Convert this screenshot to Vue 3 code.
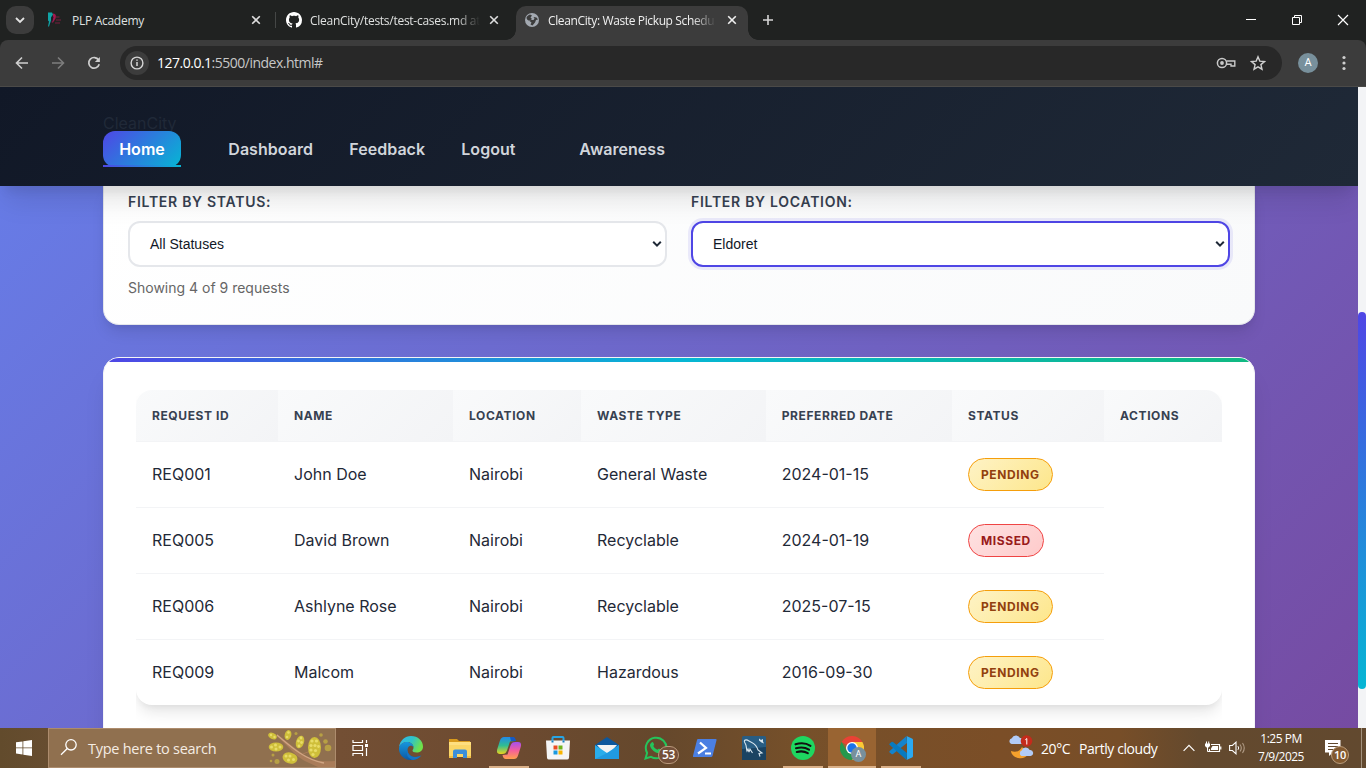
<script setup>
const nav = [
  { text: 'Home', cls: 'home' },
  { text: 'Dashboard', cls: 'dash' },
  { text: 'Feedback', cls: 'feed' },
  { text: 'Logout', cls: 'logout' },
  { text: 'Awareness', cls: 'aware' },
]
const heads = ['Request ID', 'Name', 'Location', 'Waste Type', 'Preferred Date', 'Status', 'Actions']
const rows = [
  ['REQ001', 'John Doe', 'Nairobi', 'General Waste', '2024-01-15', 'Pending'],
  ['REQ005', 'David Brown', 'Nairobi', 'Recyclable', '2024-01-19', 'Missed'],
  ['REQ006', 'Ashlyne Rose', 'Nairobi', 'Recyclable', '2025-07-15', 'Pending'],
  ['REQ009', 'Malcom', 'Nairobi', 'Hazardous', '2016-09-30', 'Pending'],
]
</script>

<template>
  <div class="screen">
    <div class="tabs">
      <div class="tab-search">
        <svg width="28" height="28" viewBox="0 0 28 28"><path d="M10 12l4 4 4-4" fill="none" stroke="#e3e3e3" stroke-width="1.8" /></svg>
      </div>
      <div class="tab t1">
        <svg class="fav" width="16" height="16" viewBox="0 0 16 16">
          <path d="M2 .5h4l1 2-2 3v3l-2 6H2l1-5-1-1z" fill="#10a3a5" />
          <path d="M7 1.500c3 0 3.500 3 2.500 5L7 10.500H5l2-4z" fill="#a3194f" />
          <path d="M6 4l1.500 1-1 4-2.500 5 1.500-5z" fill="#171d2b" />
          <path d="M9.500 5h4M10 8h5M9 11h5" stroke="#7a1c3f" stroke-width="1" />
        </svg>
        <span class="title plp">PLP Academy</span>
        <svg class="x" width="10" height="10" viewBox="0 0 10 10"><path d="M1.200 1.200l7.600 7.600M8.800 1.200l-7.600 7.600" stroke="#dedede" stroke-width="1.600" /></svg>
      </div>
      <div class="sep"></div>
      <div class="tab t2">
        <svg class="fav" width="16" height="16" viewBox="0 0 16 16"><path fill="#fff" fill-rule="evenodd" d="M8 0C3.580 0 0 3.580 0 8c0 3.540 2.290 6.530 5.470 7.590.4.070.550-.170.550-.380 0-.190-.010-.820-.010-1.490-2.010.370-2.530-.490-2.690-.940-.090-.230-.480-.940-.820-1.130-.280-.150-.680-.520-.010-.530.630-.010 1.080.580 1.230.820.720 1.210 1.870.870 2.330.660.070-.520.280-.870.510-1.070-1.780-.2-3.640-.890-3.640-3.950 0-.870.310-1.590.820-2.150-.080-.2-.360-1.020.080-2.120 0 0 .670-.210 2.200.820.640-.180 1.320-.270 2-.270s1.360.090 2 .270c1.530-1.040 2.200-.820 2.200-.820.440 1.100.160 1.920.080 2.120.510.560.820 1.270.820 2.150 0 3.070-1.870 3.750-3.650 3.950.290.250.540.730.540 1.480 0 1.070-.010 1.930-.010 2.200 0 .210.150.460.550.380A8.010 8.010 0 0 0 16 8c0-4.420-3.580-8-8-8z" /></svg>
        <span class="title fade gh">CleanCity/tests/test-cases.md at</span>
        <svg class="x" width="10" height="10" viewBox="0 0 10 10"><path d="M1.200 1.200l7.600 7.600M8.800 1.200l-7.600 7.600" stroke="#dedede" stroke-width="1.600" /></svg>
      </div>
      <div class="tab t3">
        <svg class="fav" width="16" height="16" viewBox="0 0 16 16">
          <circle cx="8" cy="8" r="7" fill="#a3a9b1" />
          <path d="M2.500 5.500C3 4 4.500 3 6 2.500L8 3.500 6.500 5.500 8 7l-2 1.500-1.500 0C3.500 8 2.500 7 2.500 5.500zM9.500 5l3 .5 1.500 2-2 .5-1 2.500-2.500 3-2-1 1-2-2-1.500 1.500-1h2.500l1-1.500z" fill="#3c3c3c" />
        </svg>
        <span class="title fade cc">CleanCity: Waste Pickup Schedu</span>
        <svg class="x" width="10" height="10" viewBox="0 0 10 10"><path d="M1.200 1.200l7.600 7.600M8.800 1.200l-7.600 7.600" stroke="#f0f0f0" stroke-width="1.600" /></svg>
      </div>
      <svg class="plus" width="12" height="12" viewBox="0 0 12 12"><path d="M6 1v10M1 6h10" stroke="#d5d5d5" stroke-width="1.600" /></svg>
      <div class="win">
        <svg width="46" height="40" viewBox="0 0 46 40"><path d="M18 19.500h10" stroke="#fff" /></svg>
        <svg width="46" height="40" viewBox="0 0 46 40"><path d="M18.500 17.500h7v7h-7zM20.500 17.500v-2h7v7h-2" fill="none" stroke="#fff" /></svg>
        <svg width="46" height="40" viewBox="0 0 46 40"><path d="M18 15l10 10M28 15l-10 10" stroke="#fff" stroke-width="1.200" /></svg>
      </div>
    </div>

    <div class="toolbar-back">
      <div class="toolbar">
        <svg width="36" height="36" viewBox="0 0 36 36"><path d="M24 18H13M18 12.500L12.500 18l5.500 5.500" fill="none" stroke="#cfcfcf" stroke-width="1.600" /></svg>
        <svg width="36" height="36" viewBox="0 0 36 36"><path d="M12 18h11M18 12.500l5.500 5.500-5.500 5.500" fill="none" stroke="#7d7d7d" stroke-width="1.600" /></svg>
        <svg width="36" height="36" viewBox="0 0 36 36"><path d="M22.600 15A5.300 5.300 0 1 0 23.200 19.300" fill="none" stroke="#cfcfcf" stroke-width="1.700" /><path d="M23.900 12v5h-5z" fill="#cfcfcf" /></svg>
        <div class="omni">
          <div class="info">
            <svg width="24" height="24" viewBox="0 0 24 24"><circle cx="12" cy="12" r="5.900" fill="none" stroke="#d6d6d6" stroke-width="1.400" /><path d="M12 11v4M12 8.500v1.300" stroke="#d6d6d6" stroke-width="1.500" /></svg>
          </div>
          <span class="url"><b>127.0.0.1</b>:5500/index.html#</span>
          <svg class="key" width="20" height="16" viewBox="0 0 20 16"><circle cx="6" cy="8" r="4.600" fill="none" stroke="#c9c9c9" stroke-width="1.500" /><circle cx="6" cy="8" r="1.900" fill="#c9c9c9" /><path d="M10.500 6h8.300v5h-3.800v-1.800h-4.500" fill="none" stroke="#c9c9c9" stroke-width="1.400" /></svg>
          <svg class="star" width="16" height="16" viewBox="0 0 16 16"><path d="M8 1.800l1.800 4.300 4.700.400-3.600 3.100 1.100 4.600L8 11.800l-4 2.400 1.100-4.600L1.500 6.500l4.700-.4z" fill="none" stroke="#d0d0d0" stroke-width="1.400" /></svg>
        </div>
        <div class="avatar">A</div>
        <svg class="menu" width="6" height="16" viewBox="0 0 6 16"><g fill="#cfcfcf"><circle cx="3" cy="2.500" r="1.600" /><circle cx="3" cy="8" r="1.600" /><circle cx="3" cy="13.500" r="1.600" /></g></svg>
      </div>
    </div>

    <div class="viewport">
      <div class="page">
        <header>
          <div class="logo">CleanCity</div>
          <nav><a v-for="n in nav" :key="n.text" :class="n.cls">{{ n.text }}</a></nav>
        </header>
        <section class="card filters">
          <div class="field">
            <label>Filter by Status:</label>
            <div class="select"><span>All Statuses</span><svg width="10" height="8" viewBox="0 0 10 8"><path d="M1.200 1.800L5 5.600l3.800-3.800" fill="none" stroke="#1f2937" stroke-width="2" /></svg></div>
            <p>Showing 4 of 9 requests</p>
          </div>
          <div class="field">
            <label>Filter by Location:</label>
            <div class="select focus"><span>Eldoret</span><svg width="10" height="8" viewBox="0 0 10 8"><path d="M1.200 1.800L5 5.600l3.800-3.800" fill="none" stroke="#1f2937" stroke-width="2" /></svg></div>
          </div>
        </section>
        <section class="card list">
          <div class="bar"></div>
          <div class="wrap">
            <table>
              <thead><tr><th v-for="h in heads" :key="h">{{ h }}</th></tr></thead>
              <tbody>
                <tr v-for="r in rows" :key="r[0]">
                  <td v-for="c in r.slice(0, 5)" :key="c">{{ c }}</td>
                  <td class="st"><span class="badge" :class="r[5].toLowerCase()">{{ r[5] }}</span></td>
                </tr>
              </tbody>
            </table>
          </div>
        </section>
      </div>
      <div class="scroll"><div class="thumb"></div></div>
    </div>

    <footer class="taskbar">
      <div class="start">
        <svg width="16" height="16" viewBox="0 0 16 16"><path fill="#fff" d="M0 2.300l6.500-.9v6.100H0zM7.300 1.300L16 0v7.500H7.300zM0 8.300h6.500v6.200L0 13.600zM7.300 8.300H16V16l-8.700-1.300z" /></svg>
      </div>
      <div class="search">
        <svg class="mag" width="18" height="18" viewBox="0 0 18 18"><circle cx="11" cy="6.800" r="5.200" fill="none" stroke="#fff" stroke-width="1.300" /><path d="M7.300 10.500L1 16.800" stroke="#fff" stroke-width="1.300" /></svg>
        <span>Type here to search</span>
        <svg class="flower" width="67" height="38" viewBox="0 0 67 38">
          <path d="M9 5c10 8 20 16 29 22 9 5 17 6 30 5v6H50c-8-4-16-6-24-14C19 17 14 12 9 7z" fill="#a97c59" />
          <path d="M9 6c13 11 28 25 47 28" fill="none" stroke="#d0a583" stroke-width="1.300" />
          <path d="M35 25c4-2 8-3 11-3" fill="none" stroke="#a97c59" />
          <g fill="#cfbf3a">
            <ellipse cx="4.500" cy="7" rx="4.500" ry="3" transform="rotate(25 4.500 7)" /><ellipse cx="20" cy="6" rx="3.300" ry="5" transform="rotate(15 20 6)" /><ellipse cx="32" cy="13" rx="4" ry="6.500" transform="rotate(18 32 13)" /><ellipse cx="8" cy="18" rx="7.300" ry="4.500" /><ellipse cx="46.500" cy="18.500" rx="6.500" ry="10.500" /><ellipse cx="22" cy="29" rx="7.500" ry="5.500" transform="rotate(15 22 29)" />
          </g>
          <g fill="#e8dc68">
            <circle cx="3" cy="6" r="1.200" /><circle cx="6.500" cy="8" r="1.200" /><circle cx="20.500" cy="3.500" r="1.300" /><circle cx="19" cy="8" r="1.300" /><circle cx="33" cy="9" r="1.400" /><circle cx="30.500" cy="12" r="1.400" /><circle cx="33.500" cy="13.500" r="1.400" /><circle cx="31" cy="17" r="1.400" /><circle cx="3.500" cy="18" r="1.500" /><circle cx="7.500" cy="16" r="1.500" /><circle cx="8" cy="20" r="1.500" /><circle cx="12" cy="18" r="1.500" /><circle cx="44" cy="12" r="1.600" /><circle cx="48.500" cy="12" r="1.600" /><circle cx="43" cy="16.500" r="1.600" /><circle cx="47" cy="16.500" r="1.600" /><circle cx="50.500" cy="17.500" r="1.400" /><circle cx="43" cy="21" r="1.600" /><circle cx="47.500" cy="21.500" r="1.600" /><circle cx="45" cy="25.500" r="1.600" /><circle cx="18" cy="27" r="1.500" /><circle cx="22" cy="27" r="1.500" /><circle cx="20.500" cy="31" r="1.500" /><circle cx="25.500" cy="30.500" r="1.500" />
          </g>
          <g fill="#b7a044"><circle cx="28" cy="4.500" r="1.500" /><circle cx="53" cy="6" r="1.800" /><circle cx="57.500" cy="12.500" r="2.300" /><circle cx="60" cy="19" r="3.300" /><circle cx="5" cy="26" r="1.500" /><circle cx="9" cy="32.500" r="2.500" /><circle cx="3" cy="32" r="1.300" /></g>
        </svg>
      </div>
      <div class="view">
        <svg width="17" height="16" viewBox="0 0 17 16"><path d="M1 0v2.500h9.500V0M1 16v-2.500h9.500V16M1 5.500h9.500v5H1zM14.500 0v3M14.500 8v8" fill="none" stroke="#fff" stroke-width="1.200" /><path d="M13 4h3v3h-3z" fill="#fff" /></svg>
      </div>
      <div class="apps">
        <div class="app">
          <svg width="24" height="24" viewBox="0 0 24 24">
            <defs><linearGradient id="eg" x1="0" y1="0" x2="1" y2=".4"><stop offset="0" stop-color="#31b8ef" /><stop offset=".55" stop-color="#2fc3c9" /><stop offset="1" stop-color="#6fe24a" /></linearGradient><linearGradient id="eb" x1="0" y1="0" x2="0" y2="1"><stop offset="0" stop-color="#1696dd" /><stop offset="1" stop-color="#0c59a4" /></linearGradient></defs>
            <path d="M0 11C1 4.500 6 0 12 0c7 0 12 5 12 10.500 0 4-3 6-6.500 6-3 0-4-1-4-2 0-.7 1-1.200 1-3C14.500 8 11 6 8 6 4 6 1 9 0 11z" fill="url(#eg)" />
            <path d="M0 12C.5 8.500 4 6 8 6c3.500 0 6.500 2.300 6.500 5.200-.7-1-1.800-1.600-3-1.400-2 .5-3 2.200-3 4.200 0 4 3.500 7 8 7 2 0 4-.8 5.500-1.700C20 22.300 16 24 12 24 5 24-.5 18.500 0 12z" fill="url(#eb)" />
            <path d="M8.500 14c0 4.500 4 7.500 8.500 7 2 0 4-.8 5.500-1.700-1.700 2.600-5 4.500-8.500 4.700C9 23 6.500 18 8.500 14z" fill="#1474c4" />
          </svg>
        </div>
        <div class="app">
          <svg width="24" height="24" viewBox="0 0 24 24"><path d="M1 3h8l2 2h11v4H1z" fill="#d99a1c" /><path d="M1 6h22v15H1z" fill="#fbd667" /><path d="M1 6h22v3H1z" fill="#ffdf80" /><path d="M5 22v-6.500a2 2 0 0 1 2-2h10a2 2 0 0 1 2 2V22h-4v-4H9v4z" fill="#3b8fd9" /><path d="M1 20h4v2H1zM19 20h4v2h-4z" fill="#f2bd42" /></svg>
        </div>
        <div class="app run">
          <svg width="24" height="24" viewBox="0 0 24 24">
            <defs><linearGradient id="ca" x1="0" y1="0" x2="0" y2="1"><stop offset="0" stop-color="#2189e8" /><stop offset=".5" stop-color="#30bd92" /><stop offset="1" stop-color="#e9d51d" /></linearGradient><linearGradient id="cb" x1="0" y1="0" x2="0" y2="1"><stop offset="0" stop-color="#a44ff0" /><stop offset=".5" stop-color="#f55e9a" /><stop offset="1" stop-color="#ffa04d" /></linearGradient></defs>
            <path d="M7 1h8c2 0 2.500 1.500 3 4l-5 .5-3 9C9 17 8 18 5 18H3c-3 0-3.500-2-2.700-5l2.500-8C4 2 5 1 7 1z" fill="url(#ca)" />
            <path d="M13 1h3c2 0 2.500 2 3 4h-5z" fill="#1559c4" />
            <path d="M17 23H9c-2 0-3-1.500-3.500-4l5-.5 3-9C14.500 7 15.500 6 18.500 6H21c3 0 3.500 2 2.700 5l-2.500 8c-1 3-2.200 4-4.200 4z" fill="url(#cb)" />
          </svg>
        </div>
        <div class="app">
          <svg width="24" height="24" viewBox="0 0 24 24"><path d="M6.500 6V2a1 1 0 0 1 1-1h9a1 1 0 0 1 1 1v4" fill="none" stroke="#27a5e5" stroke-width="2" /><path d="M0 4.500h24l-1 17.500a2 2 0 0 1-2 1.500H3A2 2 0 0 1 1 22z" fill="#f5f5f5" /><path d="M5.500 4.500h2v2h-2zM16.500 4.500h2v2h-2z" fill="#1680c2" /><path d="M7.500 9.500h4v4h-4z" fill="#ea4c23" /><path d="M12.500 9.500h4v4h-4z" fill="#71b41a" /><path d="M7.500 14.500h4v4h-4z" fill="#1998df" /><path d="M12.500 14.500h4v4h-4z" fill="#f9b500" /></svg>
        </div>
        <div class="app">
          <svg width="24" height="24" viewBox="0 0 24 24"><path d="M0 9L12 1l12 8v4H0z" fill="#0d579c" /><path d="M2 9h20l-7 8H9z" fill="#f2f2f2" /><path d="M0 9l12 8 12-8v14H0z" fill="#29adeb" /><path d="M24 9v14H0l14-7z" fill="#1c91da" opacity=".65" /></svg>
        </div>
        <div class="app">
          <svg width="24" height="24" viewBox="0 0 24 24"><path d="M1.500 22.500l1.600-5.600A10.300 10.300 0 1 1 7 20.900z" fill="none" stroke="#25c45b" stroke-width="2" /><path d="M8 6.300c.7-.5 1.200 0 1.700 1.300.5 1.200.5 1.400-.4 2.400.9 1.800 2.200 2.900 4.200 3.800.8-1 1-1.400 1.800-1 2.300 1 2.400 1.200 2.200 2-.6 2.200-3.200 2.600-5.500 1.600C8.500 15 6 11.500 6 9c0-1 1-2.200 2-2.700z" fill="#25c45b" /></svg>
          <span class="count">53</span>
        </div>
        <div class="app">
          <svg width="24" height="24" viewBox="0 0 24 24"><path d="M5 3h17.500a1 1 0 0 1 1 1.300L19.500 20a1.500 1.500 0 0 1-1.500 1H1a1 1 0 0 1-1-1.300L4 4a1.500 1.500 0 0 1 1-1z" fill="#4b7fe2" /><path d="M7 6.500l6 5.500-8 5.500M12 17.500h6" fill="none" stroke="#fff" stroke-width="2.200" /></svg>
        </div>
        <div class="app">
          <svg width="24" height="24" viewBox="0 0 24 24"><rect width="24" height="24" rx="1.500" fill="#285d83" /><path d="M0 13l24-2v13H0z" fill="#1a4362" /><path d="M7 16l-1-3-1 2c-1-3 0-5-2-8S4 3 7 5s7 2 9 9l4 3-3 .5 1 3M7 16l1-3 2.500 4" fill="none" stroke="#d7e5ee" stroke-width="1.100" /><path d="M17 2.500l2 1.500 2-1v2.500l1 2-2.500-1-2.500-2z" fill="#d7e5ee" /></svg>
        </div>
        <div class="app run">
          <svg width="24" height="24" viewBox="0 0 24 24"><circle cx="12" cy="12" r="12" fill="#1ed760" /><path d="M4.500 8.300c5-1.500 11-1 15 1.500M5 12.300c4.500-1.300 9.500-.8 13 1.300M5.800 16c4-1 8-.6 11 1.200" fill="none" stroke="#111" stroke-width="2.100" stroke-linecap="round" /></svg>
        </div>
        <div class="app active">
          <svg width="24" height="24" viewBox="0 0 24 24"><path d="M12 12L1.600 6A12 12 0 0 1 22.400 6z" fill="#e94235" /><path d="M12 12V6h10.400A12 12 0 0 1 12 24l5.200-9z" fill="#fcc934" /><path d="M12 12l5.200 3L12 24A12 12 0 0 1 1.600 6l5.200 9z" fill="#25984d" /><circle cx="12" cy="12" r="6" fill="#fff" /><circle cx="12" cy="12" r="4.700" fill="#1b73e8" /></svg>
          <span class="mini">A</span>
        </div>
        <div class="app run">
          <svg width="24" height="24" viewBox="0 0 24 24"><path d="M18 7L4 18a1.200 1.200 0 0 1-1.500 0L.7 16.500a1 1 0 0 1 0-1.500L17.500 0z" fill="#1483cc" /><path d="M18 17L4 6a1.200 1.200 0 0 0-1.500 0L.7 7.500a1 1 0 0 0 0 1.500L17.500 24z" fill="#087abf" /><path d="M17.500 0l5.500 2.500a1.500 1.500 0 0 1 1 1.400v16.200a1.500 1.500 0 0 1-1 1.400L17.500 24c.4-.3.5-.8.5-1.500v-21c0-.7-.1-1.200-.5-1.500z" fill="#29a9f2" /></svg>
        </div>
      </div>
      <div class="tray">
        <svg class="weather" width="26" height="26" viewBox="0 0 26 26">
          <path d="M3 17c5 2 9 0 11-4l6 7c-2 4-6 5-10 4-4-1-7-4-7-7z" fill="#f5a02c" />
          <path d="M3.500 10a3 3 0 0 1 .3-5.800A4.500 4.500 0 0 1 12 4a3 3 0 0 1 1 6z" fill="#b2cbf6" />
          <path d="M13.500 22a3 3 0 0 1 .2-5.500 4.300 4.300 0 0 1 8-.5 3 3 0 0 1 .8 6z" fill="#b2cbf6" />
          <circle cx="18.500" cy="7" r="5.800" fill="#c42b1c" />
          <path d="M17.300 5.800l1.500-1.300v6" fill="none" stroke="#fff" stroke-width="1" />
        </svg>
        <span class="temp">20°C</span><span class="cloud">Partly cloudy</span>
        <svg class="chev" width="12" height="8" viewBox="0 0 12 8"><path d="M.6 6.800L6 1.400l5.400 5.400" fill="none" stroke="#fff" stroke-width="1.200" /></svg>
        <svg class="batt" width="17" height="14" viewBox="0 0 17 14"><path d="M6 3.500h8.500v7H4.500V8M15.800 5.500v3" fill="none" stroke="#fff" stroke-width="1.200" /><path d="M7.500 5h5.500v4H6V7.500zM0 2.500h5V5L3.500 6.500h-2L0 5zM1 .5h1v2H1zM3.200.5h1v2h-1z" fill="#fff" /><path d="M2.500 6v4.500h2" fill="none" stroke="#fff" /></svg>
        <svg class="spk" width="17" height="14" viewBox="0 0 17 14"><path d="M.6 4.500h2.800L7 1.200v11.600L3.400 9.500H.6z" fill="none" stroke="#fff" stroke-width="1.100" /><path d="M9 5.200q1.300 1.800 0 3.600" fill="none" stroke="#fff" /><path d="M11 3.500q2.600 3.500 0 7M13.500 2q3.500 5 0 10" fill="none" stroke="#b09b85" stroke-width="1.100" /></svg>
        <div class="clock"><span>1:25 PM</span><span>7/9/2025</span></div>
        <div class="notif">
          <svg width="18" height="18" viewBox="0 0 18 18"><path d="M1 1h15.500v12.500H9L5 17v-3.500H1z" fill="#fff" /><path d="M4 4.500h10M4 7.500h10M4 10.500h6" stroke="#62492f" stroke-width="1.100" /></svg>
          <span class="ten">10</span>
        </div>
        <div class="desk"></div>
      </div>
    </footer>
  </div>
</template>

<style>
html, body { margin: 0; overflow: hidden; }
</style>
<style scoped>
* { box-sizing: border-box; }
svg { display: block; flex: none; }
.screen { width: 1366px; height: 768px; display: flex; flex-direction: column; overflow: hidden; font-family: "Open Sans", "Noto Sans", sans-serif; }
.tabs { height: 40px; background: #202221; display: flex; align-items: center; color: #dfe1e0; }
.tab-search { width: 28px; height: 28px; margin-left: 6px; border-radius: 10px; background: #3c3c3c; }
.tab { display: flex; align-items: center; height: 34px; }
.title { font-size: 12px; white-space: nowrap; margin-left: 8px; flex: none; }
.t1 { margin-left: 12px; width: 229px; }
.t1 .title { margin-left: 10px; width: 170px; letter-spacing: -.28px; }
.sep { width: 1px; height: 16px; background: #454746; margin-right: 10px; }
.t2 { width: 230px; }
.gh { width: 170px; letter-spacing: -.27px; }
.cc { width: 168px; letter-spacing: -.37px; }
.fade { -webkit-mask-image: linear-gradient(90deg, #000 86%, transparent 100%); mask-image: linear-gradient(90deg, #000 86%, transparent 100%); }
.x { margin-left: 9px; }
.t3 { position: relative; width: 232px; height: 34px; align-self: flex-end; background: #3c3c3c; border-radius: 10px 10px 0 0; padding-left: 8px; padding-bottom: 6px; color: #f0f0f0; }
.t3::before, .t3::after { content: ""; position: absolute; bottom: 0; width: 10px; height: 10px; }
.t3::before { left: -10px; background: radial-gradient(circle at 0 0, transparent 9.500px, #3c3c3c 10px); }
.t3::after { right: -10px; background: radial-gradient(circle at 100% 0, transparent 9.500px, #3c3c3c 10px); }
.t3 .x { margin-left: 11px; }
.plus { margin-left: 14px; }
.win { display: flex; margin-left: auto; }
.toolbar-back { background: #202221; height: 47px; }
.toolbar { height: 47px; background: #3c3c3c; border-radius: 8px 8px 0 0; border-bottom: 1px solid #4b4a48; display: flex; align-items: center; padding-left: 4px; }
.omni { width: 1162px; height: 34px; border-radius: 17px; background: #282828; margin-left: 8px; display: flex; align-items: center; padding-left: 5px; }
.info { width: 24px; height: 24px; border-radius: 50%; background: #3c3c3c; }
.url { font-size: 14px; color: #c7c7c7; margin-left: 8px; letter-spacing: -.5px; flex: 1; padding-bottom: 1px; }
.url b { font-weight: 400; color: #fff; }
.star { margin: 0 16px 0 14px; }
.avatar { width: 20px; height: 20px; border-radius: 50%; background: #78909c; color: #fff; margin-left: 16px; font: 11px/20px Roboto, sans-serif; text-align: center; }
.menu { margin-left: 23px; }

.viewport { height: 641px; display: flex; }
.page { width: 1358px; height: 641px; overflow: hidden; background: linear-gradient(135deg, #667eea 0%, #764ba2 100%); font-family: Inter, sans-serif; color: #1f2937; }
header { position: relative; z-index: 2; height: 99px; padding: 26px 103px 0; background: linear-gradient(135deg, #111827, #1f2937); box-shadow: 0 20px 25px -5px rgba(0,0,0,.1), 0 10px 10px -5px rgba(0,0,0,.07); }
.logo { height: 18px; line-height: 20px; font-size: 16px; color: #202938; }
nav { display: flex; color: #d1d5db; font-size: 16px; font-weight: 600; line-height: 36px; letter-spacing: .03px; }
.home { position: relative; width: 78px; height: 36px; text-align: center; color: #fff; border-radius: 12px; background: linear-gradient(135deg, #4f46e5, #06b6d4); }
.home::after { content: ""; position: absolute; left: 0; bottom: 0; width: 100%; height: 2px; background: linear-gradient(135deg, #4f46e5, #06b6d4); }
.dash { margin-left: 47.300px; width: 121px; }
.feed { width: 112px; }
.logout { width: 118px; }
.card { width: 1152px; margin-left: 103px; }
.filters { display: flex; gap: 24px; height: 139px; padding: 6px 24px 0; background: linear-gradient(135deg, #fff, #f9fafb); border: 1px solid #e5e7eb; border-top: 0; border-radius: 0 0 16px 16px; box-shadow: 0 10px 15px -3px rgba(0,0,0,.1), 0 4px 6px -2px rgba(0,0,0,.05); }
.field { width: 539px; }
label { display: block; font-size: 14px; line-height: 20px; height: 29px; font-weight: 600; letter-spacing: .72px; text-transform: uppercase; color: #374151; }
.select { height: 46px; border: 2px solid #e5e7eb; border-radius: 12px; background: #fff; padding: 0 3px 0 20px; display: flex; align-items: center; justify-content: space-between; font: 14px "Liberation Sans", sans-serif; color: #111827; }
.focus { border-color: #4f46e5; box-shadow: 0 0 0 3px rgba(79,70,229,.1); }
p { margin: 10px 0 0; font-size: 14px; line-height: 22px; color: #666; }
.list { position: relative; margin-top: 32px; height: 500px; background: #fff; border: 1px solid #f3f4f6; border-radius: 16px; overflow: hidden; padding: 32px 32px; box-shadow: 0 20px 25px -5px rgba(0,0,0,.1), 0 10px 10px -5px rgba(0,0,0,.04); }
.bar { position: absolute; left: 0; top: 0; width: 100%; height: 4px; background: linear-gradient(90deg, #4f46e5, #06b6d4, #10b981); }
.wrap { overflow: hidden; height: 400px; }
table { width: 1086px; table-layout: fixed; border-collapse: separate; border-spacing: 0; border-radius: 16px; overflow: hidden; box-shadow: 0 10px 15px -3px rgba(0,0,0,.1), 0 4px 6px -2px rgba(0,0,0,.05); }
th { height: 52px; padding: 0 16px; text-align: left; font-size: 12px; font-weight: 700; letter-spacing: .6px; text-transform: uppercase; white-space: nowrap; color: #374151; background: linear-gradient(135deg, #f9fafb, #f3f4f6); border-bottom: 1px solid #f3f4f6; }
th:nth-child(1) { width: 142px; }
th:nth-child(2) { width: 175px; }
th:nth-child(3) { width: 128px; }
th:nth-child(4) { width: 184.700px; }
th:nth-child(5) { width: 186.300px; }
th:nth-child(6) { width: 152px; }
td { height: 66px; padding: 0 16px 1px; font-size: 16px; border-bottom: 1px solid #f3f4f6; white-space: nowrap; }
td.st { padding-bottom: 0; }
tr:last-child td { height: 65px; border-bottom: 0; }
.badge { display: inline-block; height: 33px; line-height: 31px; padding: 0 12px; border-radius: 17px; border: 1px solid; font-size: 12px; font-weight: 700; letter-spacing: .6px; text-transform: uppercase; vertical-align: middle; }
.pending { color: #92400e; border-color: #f59e0b; background: linear-gradient(135deg, #fef3c7, #fde68a) border-box; }
.missed { color: #991b1b; border-color: #ef4444; background: linear-gradient(135deg, #fee2e2, #fecaca) border-box; }
.scroll { width: 8px; background: #f3f4f6; padding-top: 225px; }
.thumb { height: 377px; border-radius: 4px; background: linear-gradient(#4f46e5, #06b6d4); }

.taskbar { height: 40px; display: flex; color: #fff; background: linear-gradient(90deg, #624b2c 0, #674d30 48px, #734f34 340px, #6c4a30 520px, #65482c 660px, #76502a 800px, #7b4e27 1000px, #774e28 1120px, #63492e 1200px, #62492f 1366px); }
.start { width: 48px; display: flex; align-items: center; justify-content: center; }
.search { width: 288px; height: 40px; background: #90704f; border: 1px solid #ad8c6d; display: flex; align-items: center; padding-left: 11px; color: #f5ece3; }
.search span { font-size: 14.500px; margin-left: 10px; width: 180px; letter-spacing: -.27px; white-space: nowrap; }
.mag { margin-top: -2px; }
.view { width: 51px; display: flex; align-items: center; justify-content: center; padding-right: 2px; }
.apps { display: flex; gap: 1px; width: 538px; }
.app { position: relative; width: 48px; height: 40px; display: flex; align-items: center; justify-content: center; flex: none; }
.run::after, .active::after { content: ""; position: absolute; bottom: 0; left: 4px; width: 40px; height: 2px; background: #dab088; }
.active { background: #996432; }
.active::after { left: 0; width: 48px; }
.count { position: absolute; left: 26px; top: 18px; width: 21px; height: 18px; border-radius: 9px; border: 1px solid #b7977a; background: #745039; font-size: 12px; line-height: 16px; text-align: center; font-weight: 600; letter-spacing: -.4px; }
.mini { position: absolute; left: 23px; top: 19px; width: 15px; height: 15px; border-radius: 50%; background: #78909c; font: 9px/15px Roboto, sans-serif; text-align: center; }
.tray { margin-left: auto; width: 358px; display: flex; align-items: center; font-size: 14px; }
.weather { margin-top: -2px; }
.temp { margin-left: 7px; width: 38px; letter-spacing: -.4px; }
.cloud { width: 104px; letter-spacing: -.42px; white-space: nowrap; }
.batt { margin-left: 10px; }
.spk { margin-left: 7px; }
.clock { width: 60px; margin-left: 5px; display: flex; flex-direction: column; text-align: center; font-size: 12px; line-height: 18px; letter-spacing: -.5px; }
.notif { position: relative; margin-left: 13px; }
.ten { position: absolute; left: 7px; top: 7px; width: 18px; height: 18px; border-radius: 9px; border: 1px solid #b99c7c; background: #82592f; font-size: 11px; line-height: 16px; text-align: center; font-weight: 600; letter-spacing: -.3px; }
.desk { margin-left: auto; margin-right: 4px; width: 1px; height: 40px; background: #a2917d; }
</style>
